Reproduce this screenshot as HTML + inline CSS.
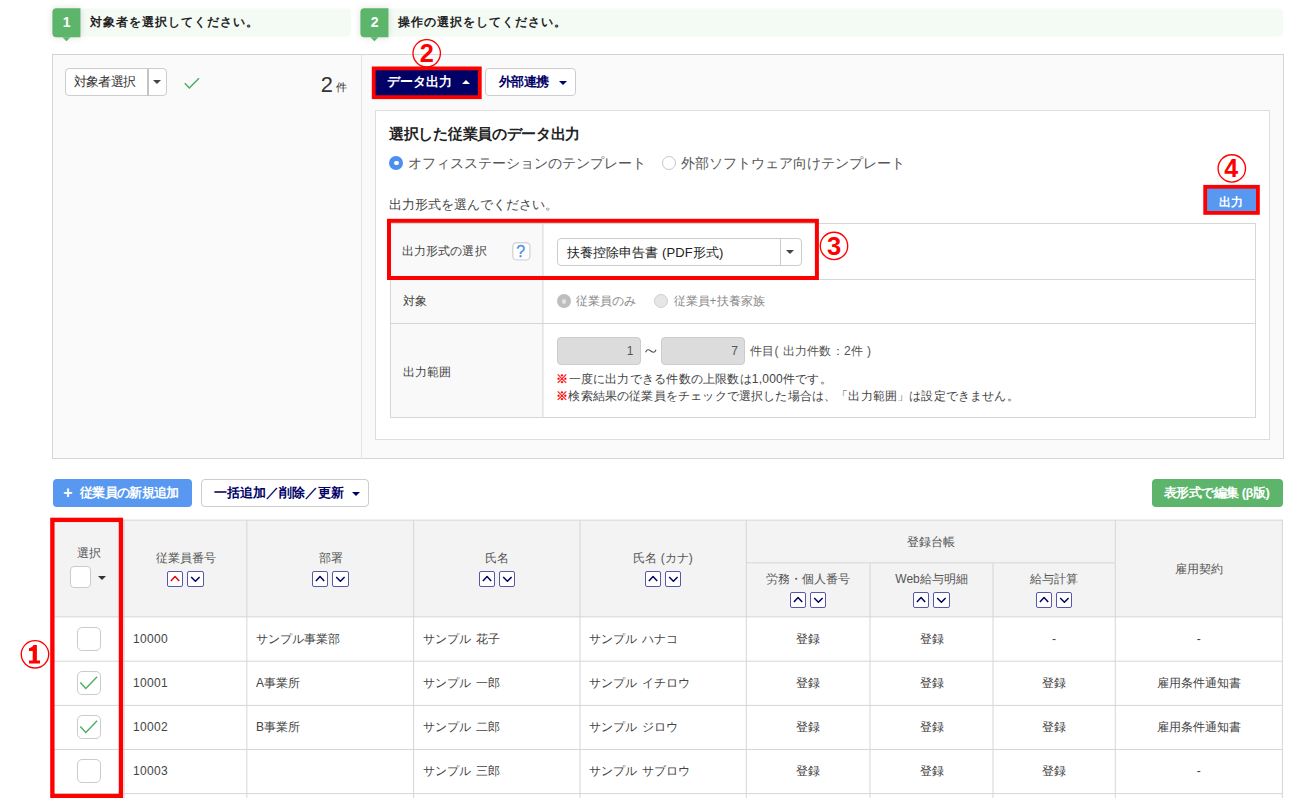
<!DOCTYPE html>
<html lang="ja">
<head>
<meta charset="utf-8">
<title>従業員データ出力</title>
<style>
*{box-sizing:border-box;margin:0;padding:0}
html,body{width:1307px;height:798px;overflow:hidden;background:#fff}
body{position:relative;font-family:"Liberation Sans",sans-serif;font-size:12px;color:#444;line-height:1}
.abs{position:absolute}
.t{position:absolute;white-space:nowrap;line-height:16px;height:16px}
.b{font-weight:bold}
.c{text-align:center}
/* step headers */
.bar{position:absolute;top:8px;height:28px;background:#f4faf4;border-radius:4px;transform:translateY(.5px)}
.num{position:absolute;top:8px;width:28.2px;height:28.6px;background:#5cb56b;border-radius:4px 0 0 4px;color:#fff;font-weight:bold;font-size:14px;line-height:29.6px;text-align:center;box-shadow:0 0 6px rgba(0,0,0,.12);transform:translate(.45px,.2px)}
.num:after{content:"";position:absolute;left:10.2px;top:28.5px;border-left:4px solid transparent;border-right:4px solid transparent;border-top:4.4px solid #5cb56b}
.btn{position:absolute;border:1px solid #ccc;border-radius:4px;background:#fff}
.caret-d{position:absolute;width:0;height:0;border-left:4px solid transparent;border-right:4px solid transparent;border-top:4px solid #333}
.caret-u{position:absolute;width:0;height:0;border-left:4px solid transparent;border-right:4px solid transparent;border-bottom:4px solid #fff}
.red{position:absolute;border:4px solid #ff0000}
.hl{position:absolute;background:#d6d6d6;height:1px}
.vl{position:absolute;background:#d6d6d6;width:1px}
.cb{position:absolute;width:24px;height:24px;border:1px solid #cbcbcb;border-radius:5px;background:#fff}
.sort{position:absolute;width:16px;height:16px;border:1px solid #5a57a8;border-radius:2px;background:#fff}
.sort svg{position:absolute;left:0;top:0}
</style>
</head>
<body>

<!-- step headers -->
<div class="bar" style="left:52px;width:299px"></div>
<div class="num" style="left:52px">1</div>
<div class="t b" style="left:89.5px;top:14px;font-size:12px;letter-spacing:1px;color:#222">対象者を選択してください。</div>
<div class="bar" style="left:360px;width:923px"></div>
<div class="num" style="left:360px">2</div>
<div class="t b" style="left:397.5px;top:14px;font-size:12px;letter-spacing:1px;color:#222">操作の選択をしてください。</div>

<!-- outer panel -->
<div class="abs" id="outer" style="left:52px;top:54px;width:1232px;height:405px;border:1px solid #d4d4d4;background:#fafafa"></div>
<div class="vl" style="left:360.5px;top:55px;height:403.5px;background:#e4e4e4"></div>

<!-- left: target select -->
<div class="btn" style="left:65px;top:68px;width:102px;height:28px"></div>
<div class="vl" style="left:147px;top:68.5px;height:27px;width:2px;background:#c4c4c4"></div>
<div class="t" style="left:73.5px;top:73.5px;font-size:13px;letter-spacing:-0.6px;color:#333">対象者選択</div>
<div class="caret-d" style="left:153.2px;top:80.3px;border-left-width:4px;border-right-width:4px;border-top:4.2px solid #444"></div>
<svg class="abs" style="left:182px;top:74px" width="20" height="18" viewBox="0 0 20 18"><path d="M2.8 9.2 L7.3 14 L17 4.2" fill="none" stroke="#4caf61" stroke-width="1.5"/></svg>
<div class="t" style="left:319.9px;top:71.8px;font-size:23px;line-height:24px;height:24px;color:#333;transform:scale(.95,.985);transform-origin:100% 84%">2</div>
<div class="t" style="left:335.5px;top:78.5px;font-size:11px;color:#333">件</div>

<!-- right: buttons -->
<div class="abs" style="left:374px;top:69px;width:106px;height:28px;background:#000066"></div>
<div class="t b" style="left:387px;top:74px;font-size:13px;color:#fff">データ出力</div>
<div class="caret-u" style="left:462px;top:79.5px"></div>
<div class="btn" style="left:485px;top:68px;width:91px;height:28px"></div>
<div class="t b" style="left:498.5px;top:74px;font-size:13px;letter-spacing:-0.4px;color:#000066">外部連携</div>
<div class="caret-d" style="left:559px;top:80.5px;border-top-color:#000066"></div>

<svg class="abs" id="redboxes" style="left:0;top:0;z-index:5" width="1307" height="798" viewBox="0 0 1307 798" fill="none" stroke="#ff0000"><rect x="373.70" y="68.40" width="106.10" height="28.80" stroke-width="3.8"/><rect x="389.00" y="220.80" width="427.90" height="57.20" stroke-width="4.0"/><rect x="1205.20" y="186.80" width="52.70" height="26.10" stroke-width="3.8"/><rect x="52.38" y="519.88" width="68.55" height="276.15" stroke-width="4.35"/></svg>
<!-- circled 2 -->
<svg class="abs" style="left:411px;top:39px" width="32" height="32" viewBox="0 0 32 32"><circle cx="15.7" cy="14.3" r="13.7" fill="none" stroke="#ff0000" stroke-width="1.35"/><text x="15.7" y="23.2" text-anchor="middle" font-family="Liberation Sans, sans-serif" font-weight="bold" font-size="25.3" fill="#ff0000">2</text></svg>

<!-- inner white panel -->
<div class="abs" style="left:375px;top:110px;width:895px;height:330px;border:1px solid #dedede;background:#fff"></div>
<div class="t b" style="left:389px;top:125px;font-size:15px;letter-spacing:-0.3px;line-height:18px;height:18px;color:#222">選択した従業員のデータ出力</div>
<!-- radios -->
<div class="abs" style="left:389.3px;top:156px;width:14px;height:14px;border-radius:50%;background:#4b8ff0"></div><div class="abs" style="left:393.9px;top:160.6px;width:4.8px;height:4.8px;border-radius:50%;background:#fff"></div>
<div class="t" style="left:408px;top:154px;font-size:14px;line-height:18px;height:18px;color:#555">オフィスステーションのテンプレート</div>
<div class="abs" style="left:661.8px;top:156px;width:14px;height:14px;border-radius:50%;border:1px solid #c8c8c8;background:#fff"></div>
<div class="t" style="left:680.5px;top:154px;font-size:14px;line-height:18px;height:18px;color:#555">外部ソフトウェア向けテンプレート</div>
<div class="t" style="left:388.5px;top:197px;font-size:13px;color:#444">出力形式を選んでください。</div>

<!-- output button + circled 4 -->
<div class="abs" style="left:1205px;top:187px;width:53px;height:26px;background:#5898f0"></div>
<div class="t b" style="left:1218.5px;top:193.5px;font-size:12px;color:#fff">出力</div>
<svg class="abs" style="left:1216px;top:153px" width="32" height="32" viewBox="0 0 32 32"><circle cx="15.8" cy="15.4" r="13.7" fill="none" stroke="#ff0000" stroke-width="1.35"/><text x="15.2" y="24.3" text-anchor="middle" font-family="Liberation Sans, sans-serif" font-weight="bold" font-size="25" fill="#ff0000">4</text></svg>

<!-- form table -->
<div class="abs" style="left:389.5px;top:223px;width:866.5px;height:195px;border:1px solid #d6d6d6;background:#fff"></div>
<div class="abs" style="left:390.5px;top:224px;width:152.5px;height:193px;background:#f9f9f9"></div>
<div class="vl" style="left:542px;top:223px;height:194.5px;transform:translateX(.45px)"></div>
<div class="hl" style="left:389.5px;top:278.5px;width:866.5px"></div>
<div class="hl" style="left:389.5px;top:323px;width:866.5px"></div>

<div class="t" style="left:402px;top:243px;font-size:12px;letter-spacing:0.1px">出力形式の選択</div>
<svg class="abs" style="left:510px;top:240px" width="24" height="24" viewBox="0 0 24 24"><rect x="2.8" y="2.8" width="17.1" height="17.1" rx="3.6" fill="#fff" stroke="#d6d6d6" stroke-width="1.4"/><text x="10.8" y="16.9" text-anchor="middle" font-family="Liberation Sans, sans-serif" font-size="16" fill="#4a8fe8" stroke="#4a8fe8" stroke-width="0.3">?</text></svg>
<div class="btn" style="left:557px;top:237.5px;width:245px;height:28.5px"></div>
<div class="vl" style="left:780px;top:238px;height:27px;background:#ccc"></div>
<div class="t" style="left:566.5px;top:243.5px;font-size:13px;letter-spacing:0.12px;line-height:17px;height:17px;color:#222">扶養控除申告書 (PDF形式)</div>
<div class="caret-d" style="left:786.2px;top:249.7px;border-top-color:#444"></div>
<!-- circled 3 -->
<svg class="abs" style="left:818px;top:230px" width="32" height="32" viewBox="0 0 32 32"><circle cx="16" cy="15.9" r="13.7" fill="none" stroke="#ff0000" stroke-width="1.35"/><text x="16.1" y="25" text-anchor="middle" font-family="Liberation Sans, sans-serif" font-weight="bold" font-size="25.5" fill="#ff0000">3</text></svg>

<div class="t" style="left:402.5px;top:293.3px;font-size:12px">対象</div>
<div class="abs" style="left:557px;top:294.3px;width:14px;height:14px;border-radius:50%;background:#bebebe"></div><div class="abs" style="left:561.7px;top:299px;width:4.6px;height:4.6px;border-radius:50%;background:#e2e2e2"></div>
<div class="t" style="left:575.5px;top:293px;font-size:12px;color:#888">従業員のみ</div>
<div class="abs" style="left:654.3px;top:294.3px;width:14px;height:14px;border-radius:50%;border:1px solid #cfcfcf;background:#e6e6e6"></div>
<div class="t" style="left:673.5px;top:293px;font-size:12px;color:#888">従業員+扶養家族</div>

<div class="t" style="left:402.5px;top:363.5px;font-size:12px">出力範囲</div>
<div class="abs" style="left:557px;top:337px;width:84px;height:28px;border:1px solid #ccc;border-radius:4px;background:#dcdcdc"></div>
<div class="t" style="left:598px;top:343px;width:35.5px;text-align:right;font-size:12px;color:#555">1</div>
<svg class="abs" style="left:644px;top:346px" width="14" height="10" viewBox="0 0 14 10"><path d="M1.6 6.2 C2.8 3.2 4.6 3.2 6.8 5 S10.8 6.8 12 3.8" fill="none" stroke="#555" stroke-width="1.15"/></svg>
<div class="abs" style="left:661px;top:337px;width:84px;height:28px;border:1px solid #ccc;border-radius:4px;background:#dcdcdc"></div>
<div class="t" style="left:702.5px;top:343px;width:35.5px;text-align:right;font-size:12px;color:#555">7</div>
<div class="t" style="left:750px;top:343px;font-size:12px;letter-spacing:0.3px;color:#555">件目( 出力件数：2件 )</div>
<div class="t" style="left:556.5px;top:371px;font-size:12px;letter-spacing:0.22px;color:#444"><span style="color:#f00;font-weight:bold;margin-left:-0.8px;margin-right:0.6px">※</span>一度に出力できる件数の上限数は1,000件です。</div>
<div class="t" style="left:556.5px;top:388px;font-size:12px;letter-spacing:0.17px;color:#444"><span style="color:#f00;font-weight:bold;margin-left:-0.8px;margin-right:0.6px">※</span>検索結果の従業員をチェックで選択した場合は、「出力範囲」は設定できません。</div>

<!-- toolbar -->
<div class="abs" style="left:53px;top:479px;width:139px;height:27.5px;border-radius:4px;background:#5898f0"></div>
<div class="t b" style="left:63.3px;top:484.5px;font-size:16px;color:#fff">+</div><div class="t b" style="left:80px;top:485px;font-size:13px;color:#fff;letter-spacing:-0.7px">従業員の新規追加</div>
<div class="btn" style="left:201px;top:479px;width:167.5px;height:27.5px"></div>
<div class="t b" style="left:214px;top:485px;font-size:12.9px;color:#000066">一括追加／削除／更新</div>
<div class="caret-d" style="left:351.5px;top:491.5px;border-top-color:#000066"></div>
<div class="abs" style="left:1152px;top:479px;width:130.5px;height:27.5px;border-radius:4px;background:#5cb56b"></div>
<div class="t b" style="left:1164px;top:485px;font-size:13px;color:#fff;letter-spacing:-0.55px">表形式で編集 (β版)</div>

<!-- employee table -->
<!--EMP-->
<div class="abs" style="left:52px;top:520px;width:1230.5px;height:97px;background:#f3f3f3"></div>
<div class="hl" style="left:52px;top:519px;width:1230.5px;transform:translateY(0.6px)"></div>
<div class="hl" style="left:746px;top:562px;width:369px;transform:translateY(0.3px)"></div>
<div class="hl" style="left:52px;top:616px;width:1230.5px;transform:translateY(0.4px)"></div>
<div class="hl" style="left:52px;top:660px;width:1230.5px;transform:translateY(0.7px)"></div>
<div class="hl" style="left:52px;top:704px;width:1230.5px;transform:translateY(0.9px)"></div>
<div class="hl" style="left:52px;top:749px;width:1230.5px"></div>
<div class="hl" style="left:52px;top:793px;width:1230.5px;transform:translateY(0.1px)"></div>
<div class="vl" style="left:52px;top:520px;height:278px"></div>
<div class="vl" style="left:123px;top:520px;height:278px;transform:translateX(0.7px)"></div>
<div class="vl" style="left:246px;top:520px;height:278px;transform:translateX(0.35px)"></div>
<div class="vl" style="left:413px;top:520px;height:278px;transform:translateX(0.1px)"></div>
<div class="vl" style="left:579px;top:520px;height:278px;transform:translateX(0.5px)"></div>
<div class="vl" style="left:745px;top:520px;height:278px;transform:translateX(0.8px)"></div>
<div class="vl" style="left:1114px;top:520px;height:278px;transform:translateX(0.8px)"></div>
<div class="vl" style="left:1281px;top:520px;height:278px;transform:translateX(0.9px)"></div>
<div class="vl" style="left:869px;top:562.5px;height:236px;transform:translateX(0.5px)"></div>
<div class="vl" style="left:992px;top:562.5px;height:236px;transform:translateX(0.5px)"></div>
<div class="t c" style="left:52px;width:72px;top:544.5px;color:#555;left:52.5px;">選択</div>
<div class="cb" style="left:69.7px;top:566px;width:21.3px;height:21.5px;border-radius:4px"></div>
<div class="caret-d" style="left:97.5px;top:575.5px;border-left-width:4.3px;border-right-width:4.3px;border-top-width:4.5px"></div>
<div class="t c" style="left:124px;width:123px;top:549.5px;color:#555;">従業員番号</div>
<div class="sort" style="left:167.3px;top:570.5px"><svg width="14" height="14" viewBox="0 0 14 14"><path d="M2.9 8.9 L7.05 4.5 L11.2 8.9" fill="none" stroke="#e60012" stroke-width="1.5" stroke-linejoin="round"/></svg></div><div class="sort" style="left:187.2px;top:570.5px;width:16.5px"><svg width="14" height="14" viewBox="0 0 14 14"><path d="M3.2 5 L7.4 9.3 L11.6 5" fill="none" stroke="#000066" stroke-width="1.5" stroke-linejoin="round"/></svg></div>
<div class="t c" style="left:247px;width:167px;top:549.5px;color:#555;">部署</div>
<div class="sort" style="left:312.3px;top:570.5px"><svg width="14" height="14" viewBox="0 0 14 14"><path d="M2.9 8.9 L7.05 4.5 L11.2 8.9" fill="none" stroke="#000066" stroke-width="1.5" stroke-linejoin="round"/></svg></div><div class="sort" style="left:332.2px;top:570.5px;width:16.5px"><svg width="14" height="14" viewBox="0 0 14 14"><path d="M3.2 5 L7.4 9.3 L11.6 5" fill="none" stroke="#000066" stroke-width="1.5" stroke-linejoin="round"/></svg></div>
<div class="t c" style="left:414px;width:166px;top:549.5px;color:#555;">氏名</div>
<div class="sort" style="left:478.8px;top:570.5px"><svg width="14" height="14" viewBox="0 0 14 14"><path d="M2.9 8.9 L7.05 4.5 L11.2 8.9" fill="none" stroke="#000066" stroke-width="1.5" stroke-linejoin="round"/></svg></div><div class="sort" style="left:498.7px;top:570.5px;width:16.5px"><svg width="14" height="14" viewBox="0 0 14 14"><path d="M3.2 5 L7.4 9.3 L11.6 5" fill="none" stroke="#000066" stroke-width="1.5" stroke-linejoin="round"/></svg></div>
<div class="t c" style="left:580px;width:166px;top:549.5px;color:#555;">氏名 (カナ)</div>
<div class="sort" style="left:644.8px;top:570.5px"><svg width="14" height="14" viewBox="0 0 14 14"><path d="M2.9 8.9 L7.05 4.5 L11.2 8.9" fill="none" stroke="#000066" stroke-width="1.5" stroke-linejoin="round"/></svg></div><div class="sort" style="left:664.7px;top:570.5px;width:16.5px"><svg width="14" height="14" viewBox="0 0 14 14"><path d="M3.2 5 L7.4 9.3 L11.6 5" fill="none" stroke="#000066" stroke-width="1.5" stroke-linejoin="round"/></svg></div>
<div class="t c" style="left:746px;width:369px;top:533.5px;color:#555;">登録台帳</div>
<div class="t c" style="left:746px;width:124px;top:571px;color:#555;">労務・個人番号</div>
<div class="sort" style="left:789.8px;top:592px"><svg width="14" height="14" viewBox="0 0 14 14"><path d="M2.9 8.9 L7.05 4.5 L11.2 8.9" fill="none" stroke="#000066" stroke-width="1.5" stroke-linejoin="round"/></svg></div><div class="sort" style="left:809.7px;top:592px;width:16.5px"><svg width="14" height="14" viewBox="0 0 14 14"><path d="M3.2 5 L7.4 9.3 L11.6 5" fill="none" stroke="#000066" stroke-width="1.5" stroke-linejoin="round"/></svg></div>
<div class="t c" style="left:870px;width:123px;top:571px;color:#555;">Web給与明細</div>
<div class="sort" style="left:913.3px;top:592px"><svg width="14" height="14" viewBox="0 0 14 14"><path d="M2.9 8.9 L7.05 4.5 L11.2 8.9" fill="none" stroke="#000066" stroke-width="1.5" stroke-linejoin="round"/></svg></div><div class="sort" style="left:933.2px;top:592px;width:16.5px"><svg width="14" height="14" viewBox="0 0 14 14"><path d="M3.2 5 L7.4 9.3 L11.6 5" fill="none" stroke="#000066" stroke-width="1.5" stroke-linejoin="round"/></svg></div>
<div class="t c" style="left:993px;width:122px;top:571px;color:#555;">給与計算</div>
<div class="sort" style="left:1035.8px;top:592px"><svg width="14" height="14" viewBox="0 0 14 14"><path d="M2.9 8.9 L7.05 4.5 L11.2 8.9" fill="none" stroke="#000066" stroke-width="1.5" stroke-linejoin="round"/></svg></div><div class="sort" style="left:1055.7px;top:592px;width:16.5px"><svg width="14" height="14" viewBox="0 0 14 14"><path d="M3.2 5 L7.4 9.3 L11.6 5" fill="none" stroke="#000066" stroke-width="1.5" stroke-linejoin="round"/></svg></div>
<div class="t c" style="left:1115px;width:167.5px;top:560.5px;color:#555;">雇用契約</div>
<div class="cb" style="left:77px;top:627.2px"></div>
<div class="t" style="left:133px;top:631px;letter-spacing:0.3px">10000</div>
<div class="t" style="left:256px;top:631px">サンプル事業部</div>
<div class="t" style="left:422.7px;top:631px;word-spacing:1.8px">サンプル 花子</div>
<div class="t" style="left:589px;top:631px;word-spacing:1.8px">サンプル ハナコ</div>
<div class="t c" style="left:746px;width:124px;top:631px;">登録</div>
<div class="t c" style="left:870px;width:123px;top:631px;">登録</div>
<div class="t c" style="left:993px;width:122px;top:631px;">-</div>
<div class="t c" style="left:1115px;width:167.5px;top:631px;">-</div>
<div class="cb" style="left:77px;top:671.2px"></div>
<svg class="abs" style="left:77px;top:671.2px" width="24" height="24" viewBox="0 0 24 24"><path d="M3.3 11.5 L8.8 17.4 L20.1 5.8" fill="none" stroke="#4caf61" stroke-width="1.4"/></svg>
<div class="t" style="left:133px;top:675px;letter-spacing:0.3px">10001</div>
<div class="t" style="left:256px;top:675px">A事業所</div>
<div class="t" style="left:422.7px;top:675px;word-spacing:1.8px">サンプル 一郎</div>
<div class="t" style="left:589px;top:675px;word-spacing:1.8px">サンプル イチロウ</div>
<div class="t c" style="left:746px;width:124px;top:675px;">登録</div>
<div class="t c" style="left:870px;width:123px;top:675px;">登録</div>
<div class="t c" style="left:993px;width:122px;top:675px;">登録</div>
<div class="t c" style="left:1115px;width:167.5px;top:675px;">雇用条件通知書</div>
<div class="cb" style="left:77px;top:715.2px"></div>
<svg class="abs" style="left:77px;top:715.2px" width="24" height="24" viewBox="0 0 24 24"><path d="M3.3 11.5 L8.8 17.4 L20.1 5.8" fill="none" stroke="#4caf61" stroke-width="1.4"/></svg>
<div class="t" style="left:133px;top:719px;letter-spacing:0.3px">10002</div>
<div class="t" style="left:256px;top:719px">B事業所</div>
<div class="t" style="left:422.7px;top:719px;word-spacing:1.8px">サンプル 二郎</div>
<div class="t" style="left:589px;top:719px;word-spacing:1.8px">サンプル ジロウ</div>
<div class="t c" style="left:746px;width:124px;top:719px;">登録</div>
<div class="t c" style="left:870px;width:123px;top:719px;">登録</div>
<div class="t c" style="left:993px;width:122px;top:719px;">登録</div>
<div class="t c" style="left:1115px;width:167.5px;top:719px;">雇用条件通知書</div>
<div class="cb" style="left:77px;top:759.2px"></div>
<div class="t" style="left:133px;top:763px;letter-spacing:0.3px">10003</div>
<div class="t" style="left:422.7px;top:763px;word-spacing:1.8px">サンプル 三郎</div>
<div class="t" style="left:589px;top:763px;word-spacing:1.8px">サンプル サブロウ</div>
<div class="t c" style="left:746px;width:124px;top:763px;">登録</div>
<div class="t c" style="left:870px;width:123px;top:763px;">登録</div>
<div class="t c" style="left:993px;width:122px;top:763px;">登録</div>
<div class="t c" style="left:1115px;width:167.5px;top:763px;">-</div>
<svg class="abs" style="left:19px;top:638px" width="34" height="34" viewBox="0 0 34 34"><circle cx="16" cy="16.3" r="13.7" fill="none" stroke="#ff0000" stroke-width="1.35"/><path d="M17.9 7 L14.5 7 Q13.6 9.6 10 10.3 L10 13 L13.7 13 L13.7 22.4 L10 22.4 L10 25.6 L21 25.6 L21 22.4 L17.9 22.4 Z" fill="#ff0000"/></svg>
<!--/EMP-->
</body>
</html>
